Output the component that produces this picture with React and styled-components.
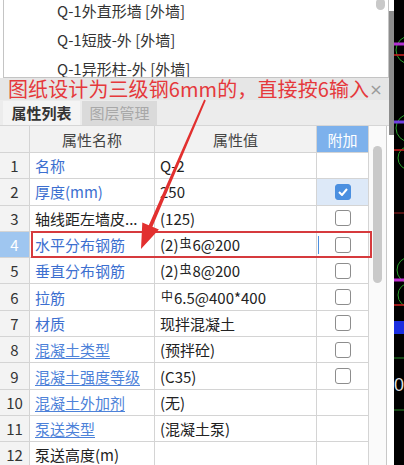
import React from 'react';
import styled, { createGlobalStyle } from 'styled-components';

const GlobalStyle = createGlobalStyle`
  body {
    margin: 0;
    background: #ffffff;
    overflow: hidden;
  }
`;

const Page = styled.div`
  position: relative;
  display: flex;
  width: 404px;
  height: 465px;
  overflow: hidden;
  font-family: 'Noto Sans CJK SC', 'Noto Sans', sans-serif;
  color: #222;
`;

const Main = styled.div`
  display: flex;
  flex-direction: column;
  width: 389px;
  flex-shrink: 0;
`;

const SideStrip = styled.div`
  width: 5px;
  flex-shrink: 0;
  background: #fff;
  padding-top: 11px;
`;

const SideBar = styled.div`
  height: 124px;
  background: #8c8c8c;
`;

const Cad = styled.div`
  width: 10px;
  flex-shrink: 0;
  background: #000;
`;

const ListPanel = styled.div`
  display: flex;
  height: 77px;
  margin-left: 3px;
  border-left: 1px solid #c4c4c4;
  border-right: 1px solid #c4c4c4;
  border-bottom: 1px solid #c4c4c4;
  background: #fff;
  overflow: hidden;
`;

const ListItems = styled.div`
  flex: 1;
  display: flex;
  flex-direction: column;
  gap: 13px;
  padding-top: 3px;
  padding-left: 53px;
`;

const ListItem = styled.div`
  flex-shrink: 0;
  height: 16px;
  line-height: 16px;
  font-size: 15px;
  color: #333;
  white-space: nowrap;
`;

const ListScroll = styled.div`
  width: 16px;
  display: flex;
  justify-content: center;
`;

const Thumb = styled.div`
  width: 9px;
  height: ${(p) => p.h}px;
  margin-top: ${(p) => p.top}px;
  border-radius: 5px;
  background: #c9c9c9;
`;

const Annotation = styled.div`
  display: flex;
  align-items: center;
  justify-content: space-between;
  height: 22px;
  padding: 0 10px 0 8px;
  background: #e6e6e6;
`;

const AnnoText = styled.span`
  font-size: 20px;
  line-height: 22px;
  color: #e5383b;
  white-space: nowrap;
  letter-spacing: 0.1px;
`;

const Close = styled.span`
  font-size: 16px;
  color: #9a9a9a;
  font-family: 'DejaVu Sans', sans-serif;
`;

const TabBar = styled.div`
  display: flex;
  align-items: flex-end;
  gap: 2px;
  height: 26px;
  padding-left: 3px;
  background: #ececec;
  border-bottom: 1px solid #d6d6d6;
  box-sizing: border-box;
`;

const Tab = styled.div`
  width: ${(p) => p.w}px;
  height: 24px;
  line-height: 24px;
  text-align: center;
  font-size: 15px;
  font-weight: ${(p) => (p.active ? 700 : 400)};
  color: ${(p) => (p.active ? '#333' : '#a8a8a8')};
  background: ${(p) => (p.active ? '#f4f4f4' : '#dadada')};
`;

const TableArea = styled.div`
  display: flex;
  flex: 1;
  border-right: 1px solid #c8c8c8;
  margin-right: 2px;
  overflow: hidden;
`;

const Table = styled.div`
  display: flex;
  flex-direction: column;
  width: 369px;
`;

const Row = styled.div`
  position: relative;
  display: grid;
  grid-template-columns: 30px 125px 162px 52px;
  height: ${(p) => (p.head ? 27 : 26.3)}px;
  flex-shrink: 0;
  box-sizing: border-box;
  border-bottom: 1px solid #d4d4d4;
  font-size: 15px;
`;

const Cell = styled.div`
  display: flex;
  align-items: center;
  justify-content: ${(p) => (p.center ? 'center' : 'flex-start')};
  padding-left: ${(p) => (p.center ? 0 : 5)}px;
  border-right: 1px solid #d4d4d4;
  white-space: nowrap;
  overflow: hidden;
  background: ${(p) => p.bg || 'transparent'};
  color: ${(p) => p.color || '#222'};
`;

const HeadCell = styled(Cell)`
  justify-content: center;
  padding-left: 0;
  background: ${(p) => (p.accent ? '#7db1ec' : '#f2f2f2')};
  color: ${(p) => (p.accent ? '#fff' : '#444')};
`;

const Index = styled(Cell)`
  justify-content: center;
  padding-left: 0;
  background: ${(p) => (p.sel ? '#9fc6f0' : '#f3f3f3')};
  color: ${(p) => (p.sel ? '#fff' : '#333')};
`;

const Name = styled.span`
  color: ${(p) => (p.link ? (p.under ? '#4d82d9' : '#3c6fd0') : '#222')};
  text-decoration: ${(p) => (p.under ? 'underline' : 'none')};
  text-underline-offset: 2px;
`;

const Sym = styled.span`
  font-size: 12px;
  position: relative;
  top: -3px;
  margin: 0 1px;
`;

const Box = styled.span`
  width: 16px;
  height: 16px;
  box-sizing: border-box;
  border-radius: 3px;
  border: 1px solid ${(p) => (p.on ? '#4a8fe0' : '#8d8d8d')};
  background: ${(p) => (p.on ? '#4a8fe0' : '#fff')};
  display: flex;
  align-items: center;
  justify-content: center;
`;

const Cursor = styled.span`
  position: absolute;
  left: 318px;
  top: 4px;
  width: 1px;
  height: 18px;
  background: #4a8fe0;
`;

const Highlight = styled.div`
  position: absolute;
  left: 31px;
  top: -1px;
  width: 341px;
  height: 27px;
  box-sizing: border-box;
  border: 2px solid #d63a3d;
  pointer-events: none;
`;

const TrackCol = styled.div`
  width: 17px;
  display: flex;
  justify-content: center;
  background: #fafafa;
`;

const Arrow = styled.svg`
  position: absolute;
  left: 0;
  top: 0;
  pointer-events: none;
`;

const rows = [
  { n: '名称', v: 'Q-2', link: true, box: null },
  { n: '厚度(mm)', v: '250', link: true, box: 'on' },
  { n: '轴线距左墙皮...', v: '(125)', link: false, box: 'off' },
  { n: '水平分布钢筋', v: ['(2)', '虫', '6@200'], link: true, box: 'off', sel: true },
  { n: '垂直分布钢筋', v: ['(2)', '虫', '8@200'], link: true, box: 'off' },
  { n: '拉筋', v: ['', '中', '6.5@400*400'], link: true, box: 'off' },
  { n: '材质', v: '现拌混凝土', link: true, box: 'off' },
  { n: '混凝土类型', v: '(预拌砼)', link: true, under: true, box: 'off' },
  { n: '混凝土强度等级', v: '(C35)', link: true, under: true, box: 'off' },
  { n: '混凝土外加剂', v: '(无)', link: true, under: true, box: null },
  { n: '泵送类型', v: '(混凝土泵)', link: true, under: true, box: null },
  { n: '泵送高度(m)', v: '', link: false, box: null },
];

function Check() {
  return (
    <svg width="10" height="8" viewBox="0 0 10 8">
      <path d="M1 4 L4 7 L9 1" fill="none" stroke="#fff" strokeWidth="2" />
    </svg>
  );
}

function Value({ v }) {
  if (Array.isArray(v)) {
    return (
      <span>
        {v[0]}
        <Sym>{v[1]}</Sym>
        {v[2]}
      </span>
    );
  }
  return <span>{v}</span>;
}

function CadDrawing() {
  return (
    <svg width="10" height="465" viewBox="0 0 10 465">
      <circle cx="16" cy="50" r="14" fill="none" stroke="#2aa02a" strokeWidth="1" />
      <line x1="0" y1="44" x2="10" y2="44" stroke="#b030d0" strokeWidth="3" />
      <line x1="0" y1="55" x2="10" y2="55" stroke="#d02020" strokeWidth="1.5" />
      <circle cx="16" cy="128" r="14" fill="none" stroke="#2aa02a" strokeWidth="1" />
      <circle cx="16" cy="158" r="12" fill="none" stroke="#2aa02a" strokeWidth="1" />
      <line x1="0" y1="122" x2="10" y2="122" stroke="#7040e0" strokeWidth="3" />
      <line x1="0" y1="150" x2="10" y2="150" stroke="#d02020" strokeWidth="1.5" />
      <line x1="0" y1="213" x2="10" y2="213" stroke="#a02020" strokeWidth="1" />
      <circle cx="16" cy="270" r="13" fill="none" stroke="#2aa02a" strokeWidth="1" />
      <circle cx="16" cy="295" r="12" fill="none" stroke="#2aa02a" strokeWidth="1" />
      <line x1="0" y1="280" x2="10" y2="280" stroke="#c030d0" strokeWidth="3" />
      <line x1="0" y1="305" x2="10" y2="305" stroke="#d02020" strokeWidth="1.5" />
      <rect x="0" y="321" width="10" height="13" fill="#1a2ee0" />
      <line x1="0" y1="358" x2="10" y2="358" stroke="#2a8a2a" strokeWidth="1" />
      <line x1="0" y1="410" x2="10" y2="410" stroke="#2a8a2a" strokeWidth="1" />
      <text x="0" y="391" fill="#ddd" fontSize="18" fontFamily="Liberation Sans">0</text>
    </svg>
  );
}

export default function App() {
  return (
    <Page>
      <GlobalStyle />
      <Main>
        <ListPanel>
          <ListItems>
            <ListItem>Q-1外直形墙 [外墙]</ListItem>
            <ListItem>Q-1短肢-外 [外墙]</ListItem>
            <ListItem>Q-1异形柱-外 [外墙]</ListItem>
          </ListItems>
          <ListScroll>
            <Thumb h={12} top={-2} />
          </ListScroll>
        </ListPanel>
        <Annotation>
          <AnnoText>图纸设计为三级钢6mm的，直接按6输入</AnnoText>
          <Close>×</Close>
        </Annotation>
        <TabBar>
          <Tab w={77} active>属性列表</Tab>
          <Tab w={75}>图层管理</Tab>
        </TabBar>
        <TableArea>
          <Table>
            <Row head>
              <HeadCell />
              <HeadCell>属性名称</HeadCell>
              <HeadCell>属性值</HeadCell>
              <HeadCell accent>附加</HeadCell>
            </Row>
            {rows.map((r, i) => (
              <Row key={i}>
                <Index sel={r.sel}>{i + 1}</Index>
                <Cell>
                  <Name link={r.link} under={r.under}>{r.n}</Name>
                </Cell>
                <Cell>
                  <Value v={r.v} />
                </Cell>
                <Cell center bg={r.box === 'on' ? '#dde9f8' : undefined}>
                  {r.box && <Box on={r.box === 'on'}>{r.box === 'on' && <Check />}</Box>}
                </Cell>
                {r.sel && <Cursor />}
                {r.sel && <Highlight />}
              </Row>
            ))}
          </Table>
          <TrackCol>
            <Thumb h={137} top={20} />
          </TrackCol>
        </TableArea>
      </Main>
      <SideStrip>
        <SideBar />
      </SideStrip>
      <Cad>
        <CadDrawing />
      </Cad>
      <Arrow width="404" height="465">
        <polygon
          points="204.2,99.6 205.8,100.4 152.4,226.8 158.9,229.5 141,249 142.3,222.5 148.8,225.2"
          fill="#e2302f"
        />
      </Arrow>
    </Page>
  );
}
